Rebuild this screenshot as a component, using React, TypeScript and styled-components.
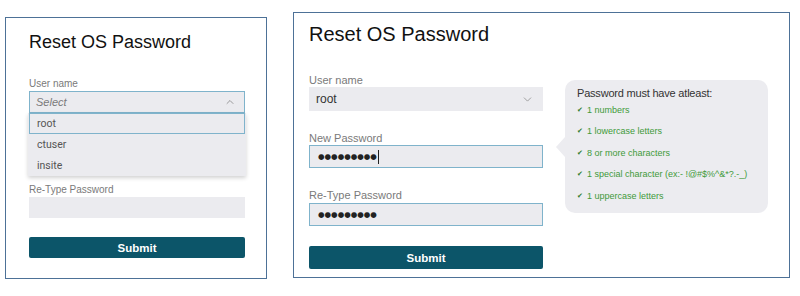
import React from 'react';
import styled, { createGlobalStyle } from 'styled-components';
import { ChevronDown, ChevronUp } from 'lucide-react';

const GlobalStyle = createGlobalStyle`
  html, body {
    margin: 0;
    padding: 0;
    background: #ffffff;
  }
  body {
    font-family: 'Liberation Sans', Arial, sans-serif;
    color: #222;
  }
`;

const Page = styled.div`
  display: flex;
  align-items: flex-start;
  width: 800px;
  height: 296px;
`;

const Panel = styled.div<{ $top: number; $left: number; $w: number; $h: number; $pad: string }>`
  box-sizing: border-box;
  margin: ${(p) => p.$top}px 0 0 ${(p) => p.$left}px;
  width: ${(p) => p.$w}px;
  height: ${(p) => p.$h}px;
  border: 1px solid #4d7197;
  padding: ${(p) => p.$pad};
  display: flex;
  flex-direction: column;
`;

const Title = styled.h1<{ $size: number }>`
  margin: 0;
  font-weight: 400;
  font-size: ${(p) => p.$size}px;
  line-height: ${(p) => p.$size + 4}px;
  color: #111;
`;

const Group = styled.div<{ $mt: number; $hidden?: boolean }>`
  position: relative;
  margin-top: ${(p) => p.$mt}px;
  display: flex;
  flex-direction: column;
  visibility: ${(p) => (p.$hidden ? 'hidden' : 'visible')};
`;

const Label = styled.div<{ $size: number; $gap: number }>`
  font-size: ${(p) => p.$size}px;
  line-height: 12px;
  color: #7a7a7a;
  margin-bottom: ${(p) => p.$gap}px;
`;

const Field = styled.div<{ $h: number; $focus?: boolean }>`
  box-sizing: border-box;
  height: ${(p) => p.$h}px;
  background: #ebebef;
  border: 1px solid ${(p) => (p.$focus ? '#7fb3cb' : '#ebebef')};
  display: flex;
  align-items: center;
  justify-content: space-between;
  padding: 0 8px 0 6px;
`;

const SelectText = styled.span<{ $placeholder?: boolean; $size: number }>`
  font-size: ${(p) => p.$size}px;
  font-style: ${(p) => (p.$placeholder ? 'italic' : 'normal')};
  color: ${(p) => (p.$placeholder ? '#7a7a7a' : '#333')};
`;

const Dots = styled.span`
  font-family: 'DejaVu Sans', sans-serif;
  font-size: 7.5px;
  letter-spacing: 0;
  color: #222;
  display: flex;
  align-items: center;
  padding-left: 2px;
`;

const Caret = styled.span`
  display: inline-block;
  width: 1px;
  height: 14px;
  background: #222;
  margin-left: 1px;
`;

const Dropdown = styled.div`
  position: absolute;
  left: -1px;
  right: -1px;
  top: 35px;
  background: #ebebef;
  box-shadow: 0 2px 4px rgba(0, 0, 0, 0.18);
  z-index: 2;
`;

const Option = styled.div<{ $active?: boolean }>`
  box-sizing: border-box;
  height: 21px;
  display: flex;
  align-items: center;
  padding-left: 7px;
  font-family: Roboto, 'Liberation Sans', sans-serif;
  font-size: 10.5px;
  color: #555;
  border: 1px solid ${(p) => (p.$active ? '#7fb3cb' : 'transparent')};
  margin: 0 1px;
`;

const Button = styled.button<{ $h: number; $mt: number }>`
  margin-top: ${(p) => p.$mt}px;
  height: ${(p) => p.$h}px;
  border: none;
  border-radius: 2px;
  background: #0c5569;
  color: #fff;
  font-family: 'Liberation Sans', Arial, sans-serif;
  font-weight: 700;
  font-size: 11.5px;
  padding: 0;
`;

const Body = styled.div`
  display: flex;
  align-items: flex-start;
`;

const FormCol = styled.div`
  width: 234px;
  display: flex;
  flex-direction: column;
`;

const Tip = styled.div`
  position: relative;
  box-sizing: border-box;
  margin: 34px 0 0 22px;
  width: 203px;
  height: 133px;
  background: #ececf0;
  border-radius: 10px;
  padding: 7px 0 0 12px;

  &::before {
    content: '';
    position: absolute;
    left: -9px;
    top: 57px;
    border-top: 10px solid transparent;
    border-bottom: 10px solid transparent;
    border-right: 9px solid #ececf0;
  }
`;

const TipTitle = styled.div`
  font-size: 11px;
  line-height: 12px;
  color: #333;
  letter-spacing: -0.2px;
`;

const Rule = styled.div`
  height: 21.5px;
  display: flex;
  align-items: center;
  gap: 4px;
  font-size: 9px;
  color: #3f9a3a;
`;

const Check = styled.span`
  font-family: 'DejaVu Sans', sans-serif;
  font-size: 7px;
  color: #2f7d2f;
`;

const rules = [
  '1 numbers',
  '1 lowercase letters',
  '8 or more characters',
  '1 special character (ex:- !@#$%^&*?.-_)',
  '1 uppercase letters',
];

const DOTS = '\u25CF\u25CF\u25CF\u25CF\u25CF\u25CF\u25CF\u25CF\u25CF';

export default function App() {
  return (
    <>
      <GlobalStyle />
      <Page>
        <Panel $top={17} $left={5} $w={262} $h={262} $pad="13px 21px 0 23px">
          <Title $size={18}>Reset OS Password</Title>
          <Group $mt={25}>
            <Label $size={10} $gap={1}>User name</Label>
            <Field $h={22} $focus>
              <SelectText $placeholder $size={11}>Select</SelectText>
              <ChevronUp size={12} strokeWidth={1.4} color="#777" />
            </Field>
            <Dropdown>
              <Option $active>root</Option>
              <Option>ctuser</Option>
              <Option>insite</Option>
            </Dropdown>
          </Group>
          {/* covered by the open dropdown */}
          <Group $mt={18} $hidden>
            <Label $size={10} $gap={1}>New Password</Label>
            <Field $h={22} />
          </Group>
          <Group $mt={18}>
            <Label $size={10} $gap={1}>Re-Type Password</Label>
            <Field $h={21} />
          </Group>
          <Button $h={21} $mt={19}>Submit</Button>
        </Panel>

        <Panel $top={12} $left={26} $w={497} $h={266} $pad="9px 20px 0 15px">
          <Title $size={20}>Reset OS Password</Title>
          <Body>
            <FormCol>
              <Group $mt={28}>
                <Label $size={11} $gap={1}>User name</Label>
                <Field $h={24}>
                  <SelectText $size={12}>root</SelectText>
                  <ChevronDown size={13} strokeWidth={1.2} color="#777" />
                </Field>
              </Group>
              <Group $mt={21}>
                <Label $size={11} $gap={1}>New Password</Label>
                <Field $h={23} $focus>
                  <Dots>
                    {DOTS}
                    <Caret />
                  </Dots>
                </Field>
              </Group>
              <Group $mt={21}>
                <Label $size={11} $gap={2}>Re-Type Password</Label>
                <Field $h={23} $focus>
                  <Dots>{DOTS}</Dots>
                </Field>
              </Group>
              <Button $h={23} $mt={20}>Submit</Button>
            </FormCol>
            <Tip>
              <TipTitle>Password must have atleast:</TipTitle>
              {rules.map((r) => (
                <Rule key={r}>
                  <Check>{'\u2714'}</Check>
                  {r}
                </Rule>
              ))}
            </Tip>
          </Body>
        </Panel>
      </Page>
    </>
  );
}
